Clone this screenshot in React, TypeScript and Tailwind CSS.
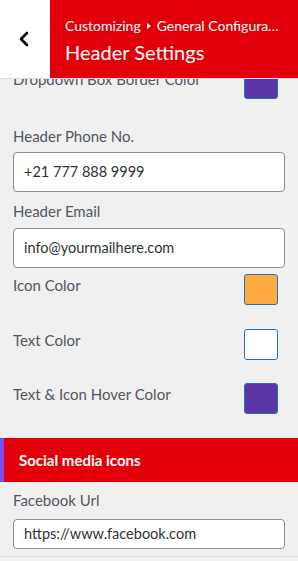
import { ReactNode } from "react";

const font = { fontFamily: 'Lato, "Open Sans", sans-serif' };

function Swatch({ color }: { color: string }) {
  return <div className={`w-[34px] h-[31px] rounded-[3px] border border-[#2271b1] ${color}`} />;
}

function ColorRow({ label, color, className = "" }: { label: string; color: string; className?: string }) {
  return (
    <div className={`flex items-start justify-between pl-[13px] pr-[20px] ${className}`}>
      <span className="pt-[1px] text-[15px] leading-[20px] text-[#50575e]">{label}</span>
      <Swatch color={color} />
    </div>
  );
}

function Label({ children, className = "" }: { children: ReactNode; className?: string }) {
  return <div className={`px-[13px] text-[15px] leading-[20px] text-[#50575e] ${className}`}>{children}</div>;
}

function Field({ value, tall = true, className = "" }: { value: string; tall?: boolean; className?: string }) {
  return (
    <div className={`mx-[13px] ${className}`}>
      <div
        className={`flex items-center rounded-[4px] border border-[#8c8f94] bg-white px-[10px] text-[14.5px] text-[#2c3338] ${
          tall ? "h-[40px]" : "h-[30px]"
        }`}
      >
        {value}
      </div>
    </div>
  );
}

export default function App() {
  return (
    <div className="flex h-[561px] w-[298px] flex-col overflow-hidden bg-[#f0f0f1]" style={font}>
      {/* panel header */}
      <div className="flex h-[79px] shrink-0 border-b border-[#dcdcde]">
        <div className="flex w-[50px] items-center justify-center bg-white">
          <svg width="14" height="16" viewBox="0 0 14 16" className="ml-[-2px]">
            <polyline points="10,2 4,8 10,14" fill="none" stroke="#000" strokeWidth="2.6" strokeLinecap="round" strokeLinejoin="round" />
          </svg>
        </div>
        <div className="flex min-w-0 flex-1 flex-col bg-[#e10009] pl-[15px] pr-[14px] pt-[16px] text-white">
          <div className="flex items-center gap-[6px] whitespace-nowrap text-[14px] leading-[20px]">
            <span>Customizing</span>
            <svg width="4" height="6" viewBox="0 0 4 6" className="shrink-0">
              <polygon points="0,0 4,3 0,6" fill="#fff" />
            </svg>
            <span className="truncate">General Configuration</span>
          </div>
          <div className="mt-[3px] text-[20px] leading-[26px]">Header Settings</div>
        </div>
      </div>

      {/* scrolled controls */}
      <div className="min-h-0 flex-1 overflow-hidden">
        <div className="-mt-[11px]">
          <ColorRow label="Dropdown Box Border Color" color="bg-[#5b35a5]" />
          <Label className="mt-[27px]">Header Phone No.</Label>
          <Field value="+21 777 888 9999" className="mt-[6px]" />
          <Label className="mt-[9px]">Header Email</Label>
          <Field value="info@yourmailhere.com" className="mt-[7px]" />
          <ColorRow label="Icon Color" color="bg-[#ffab3f]" className="mt-[6px]" />
          <ColorRow label="Text Color" color="bg-white" className="mt-[24px]" />
          <ColorRow label="Text & Icon Hover Color" color="bg-[#5b35a5]" className="mt-[23px]" />

          <div className="mt-[24px] flex h-[44px] items-center border-l-[4px] border-[#7c4dff] bg-[#e10009] pl-[15px]">
            <span className="text-[15px] font-bold text-white">Social media icons</span>
          </div>

          <Label className="mt-[8px]">Facebook Url</Label>
          <Field value="https://www.facebook.com" tall={false} className="mt-[9px]" />
          <div className="mt-[7px] border-t border-[#dcdcde]" />
        </div>
      </div>
    </div>
  );
}
